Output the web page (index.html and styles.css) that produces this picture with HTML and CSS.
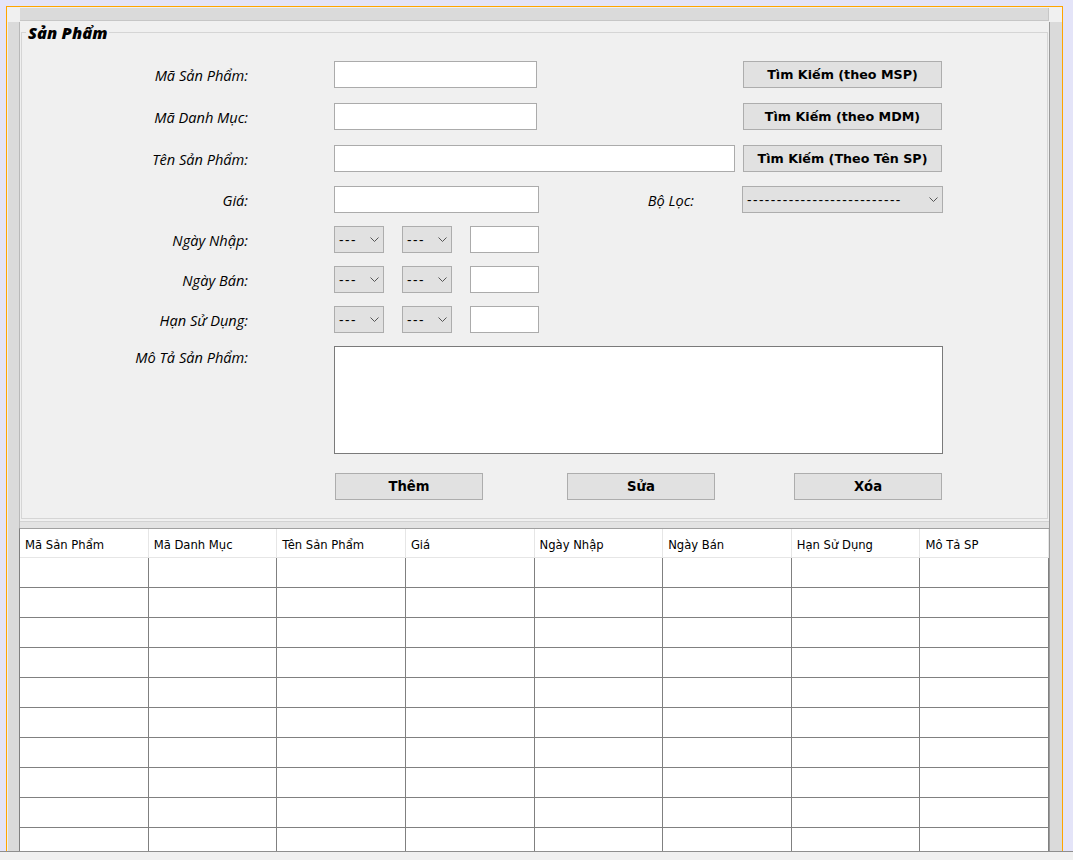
FILE: index.html
```html
<!DOCTYPE html>
<html lang="vi">
<head>
<meta charset="utf-8">
<title>Sản Phẩm</title>
<link rel="stylesheet" href="styles.css">
</head>
<body>
<div class="screen">
  <div class="frame">
    <div class="topbar"></div>
    <div class="side side-left"></div>
    <main class="content">
      <section class="group">
        <h2 class="group-title">Sản Phẩm</h2>
        <div class="form">
          <div class="row">
            <label class="label">Mã Sản Phẩm:</label>
            <input class="field field-code" type="text">
            <button class="btn btn-search gap-after-code">Tìm Kiếm (theo MSP)</button>
          </div>
          <div class="row gap15">
            <label class="label">Mã Danh Mục:</label>
            <input class="field field-code" type="text">
            <button class="btn btn-search gap-after-code">Tìm Kiếm (theo MDM)</button>
          </div>
          <div class="row gap15">
            <label class="label">Tên Sản Phẩm:</label>
            <input class="field field-name" type="text">
            <button class="btn btn-search gap-after-name">Tìm Kiếm (Theo Tên SP)</button>
          </div>
          <div class="row gap14">
            <label class="label">Giá:</label>
            <input class="field field-price" type="text">
            <label class="label-filter">Bộ Lọc:</label>
            <div class="combo combo-filter"><span class="combo-text">--------------------------</span><svg class="chev" viewBox="0 0 9 5" width="9" height="5"><polyline points="0.5,0.5 4.5,4.5 8.5,0.5" fill="none" stroke="#555" stroke-width="1"/></svg></div>
          </div>
          <div class="row gap13">
            <label class="label">Ngày Nhập:</label>
            <div class="combo combo-small"><span class="combo-text">---</span><svg class="chev" viewBox="0 0 9 5" width="9" height="5"><polyline points="0.5,0.5 4.5,4.5 8.5,0.5" fill="none" stroke="#555" stroke-width="1"/></svg></div>
            <div class="combo combo-small combo-next"><span class="combo-text">---</span><svg class="chev" viewBox="0 0 9 5" width="9" height="5"><polyline points="0.5,0.5 4.5,4.5 8.5,0.5" fill="none" stroke="#555" stroke-width="1"/></svg></div>
            <input class="field field-year" type="text">
          </div>
          <div class="row gap13">
            <label class="label">Ngày Bán:</label>
            <div class="combo combo-small"><span class="combo-text">---</span><svg class="chev" viewBox="0 0 9 5" width="9" height="5"><polyline points="0.5,0.5 4.5,4.5 8.5,0.5" fill="none" stroke="#555" stroke-width="1"/></svg></div>
            <div class="combo combo-small combo-next"><span class="combo-text">---</span><svg class="chev" viewBox="0 0 9 5" width="9" height="5"><polyline points="0.5,0.5 4.5,4.5 8.5,0.5" fill="none" stroke="#555" stroke-width="1"/></svg></div>
            <input class="field field-year" type="text">
          </div>
          <div class="row gap13">
            <label class="label">Hạn Sử Dụng:</label>
            <div class="combo combo-small"><span class="combo-text">---</span><svg class="chev" viewBox="0 0 9 5" width="9" height="5"><polyline points="0.5,0.5 4.5,4.5 8.5,0.5" fill="none" stroke="#555" stroke-width="1"/></svg></div>
            <div class="combo combo-small combo-next"><span class="combo-text">---</span><svg class="chev" viewBox="0 0 9 5" width="9" height="5"><polyline points="0.5,0.5 4.5,4.5 8.5,0.5" fill="none" stroke="#555" stroke-width="1"/></svg></div>
            <input class="field field-year" type="text">
          </div>
          <div class="row row-desc gap13">
            <label class="label label-top">Mô Tả Sản Phẩm:</label>
            <textarea class="desc"></textarea>
          </div>
          <div class="actions">
            <button class="btn btn-action">Thêm</button>
            <button class="btn btn-action btn-edit">Sửa</button>
            <button class="btn btn-action btn-delete">Xóa</button>
          </div>
        </div>
      </section>
      <div class="divider"></div>
      <div class="tablepane">
        <table class="grid">
          <thead>
            <tr class="head-row">
              <th>Mã Sản Phẩm</th><th>Mã Danh Mục</th><th>Tên Sản Phẩm</th><th>Giá</th><th>Ngày Nhập</th><th>Ngày Bán</th><th>Hạn Sử Dụng</th><th>Mô Tả SP</th>
            </tr>
          </thead>
          <tbody>
            <tr class="body-row"><td></td><td></td><td></td><td></td><td></td><td></td><td></td><td></td></tr>
            <tr class="body-row"><td></td><td></td><td></td><td></td><td></td><td></td><td></td><td></td></tr>
            <tr class="body-row"><td></td><td></td><td></td><td></td><td></td><td></td><td></td><td></td></tr>
            <tr class="body-row"><td></td><td></td><td></td><td></td><td></td><td></td><td></td><td></td></tr>
            <tr class="body-row"><td></td><td></td><td></td><td></td><td></td><td></td><td></td><td></td></tr>
            <tr class="body-row"><td></td><td></td><td></td><td></td><td></td><td></td><td></td><td></td></tr>
            <tr class="body-row"><td></td><td></td><td></td><td></td><td></td><td></td><td></td><td></td></tr>
            <tr class="body-row"><td></td><td></td><td></td><td></td><td></td><td></td><td></td><td></td></tr>
            <tr class="body-row"><td></td><td></td><td></td><td></td><td></td><td></td><td></td><td></td></tr>
            <tr class="body-row"><td></td><td></td><td></td><td></td><td></td><td></td><td></td><td></td></tr>
            <tr class="body-row"><td></td><td></td><td></td><td></td><td></td><td></td><td></td><td></td></tr>
          </tbody>
        </table>
      </div>
    </main>
    <div class="side side-right"></div>
  </div>
</div>
<div class="statusbar"></div>
</body>
</html>
```

FILE: styles.css
```css
* { box-sizing: border-box; }

html, body {
  margin: 0;
  padding: 0;
  background: #f0f0f0;
  font-family: "DejaVu Sans", sans-serif;
  color: #000;
  overflow: hidden;
}

.screen {
  height: 852px;
  background: #e4e4f8;
  padding: 6px 10px 0 6px;
  border-bottom: 1px solid #8e8e8e;
}

.frame {
  height: 100%;
  border: 1px solid #ffa500;
  border-bottom: none;
  background: #f0f0f0;
  display: grid;
  grid-template-columns: 13px 1029px 13px;
  grid-template-rows: 14px 1fr;
  overflow: hidden;
}

.topbar {
  grid-column: 2;
  grid-row: 1;
  margin-top: 1px;
  background: #dadada;
  border-bottom: 1px solid #c6c6c6;
  border-right: 1px solid #c6c6c6;
}

.side {
  grid-row: 2;
  margin-top: 1px;
  background: #dadada;
}

.side-left {
  grid-column: 1;
  margin-left: 1px;
  border-right: 1px solid #b8b8b8;
}

.side-right {
  grid-column: 3;
  border-left: 1px solid #9a9a9a;
}

.content {
  grid-column: 2;
  grid-row: 2;
  display: flex;
  flex-direction: column;
  min-height: 0;
}

.group {
  position: relative;
  margin: 11px 1px 0;
  height: 487px;
  flex: none;
  border: 1px solid #d5d5d5;
  padding-top: 28px;
}

.group-title {
  position: absolute;
  left: 4px;
  top: -10px;
  margin: 0;
  padding: 0 2px;
  background: #f0f0f0;
  font-family: "Open Sans", sans-serif;
  font-size: 16.5px;
  line-height: 20px;
  font-weight: 800;
  font-style: italic;
}

.form {
  display: flex;
  flex-direction: column;
}

.row {
  display: flex;
  align-items: center;
  height: 27px;
}

.gap15 { margin-top: 15px; }
.gap14 { margin-top: 14px; }
.gap13 { margin-top: 13px; }

.label {
  width: 226px;
  margin-right: 86px;
  text-align: right;
  font-family: "Open Sans", sans-serif;
  font-style: italic;
  font-size: 14.6px;
  line-height: 20px;
}

.label-filter {
  width: 155px;
  margin-right: 48px;
  text-align: right;
  font-family: "Open Sans", sans-serif;
  font-style: italic;
  font-size: 14.6px;
  line-height: 20px;
}

.field {
  height: 27px;
  margin: 0;
  padding: 0 4px;
  background: #fff;
  border: 1px solid #ababab;
  border-radius: 0;
  outline: none;
}

.field-code { width: 203px; }
.field-name { width: 401px; }
.field-price { width: 205px; }
.field-year { width: 69px; margin-left: 18px; }

.btn {
  height: 27px;
  margin: 0;
  padding: 0 0 1px;
  background: #e1e1e1;
  border: 1px solid #adadad;
  border-radius: 0;
  font-family: "DejaVu Sans", sans-serif;
  font-weight: bold;
  font-size: 12.7px;
  color: #000;
}

.btn-search { width: 199px; }
.gap-after-code { margin-left: 206px; }
.gap-after-name { margin-left: 8px; }

.combo {
  height: 27px;
  background: #e1e1e1;
  border: 1px solid #adadad;
  display: flex;
  align-items: center;
  justify-content: space-between;
  padding: 0 4px 0 4px;
}

.combo-small { width: 50px; }
.combo-next { margin-left: 18px; }
.combo-filter { width: 201px; }

.combo-text {
  font-family: "Open Sans", sans-serif;
  font-size: 14px;
  line-height: 20px;
  letter-spacing: 1.45px;
}

.chev { display: block; }

.row-desc {
  height: auto;
  align-items: flex-start;
}

.label-top {
  line-height: 22px;
}

.desc {
  width: 609px;
  height: 108px;
  margin: 0;
  padding: 2px;
  background: #fff;
  border: 1px solid #7a7a7a;
  border-radius: 0;
  resize: none;
  outline: none;
}

.actions {
  display: flex;
  margin-top: 19px;
  margin-left: 313px;
}

.btn-action {
  width: 148px;
  font-size: 13.2px;
}

.btn-edit { margin-left: 84px; }
.btn-delete { margin-left: 79px; }

.divider {
  flex: none;
  margin-top: 2px;
  height: 7px;
  border-top: 1px solid #d2d2d2;
  background: #e3e3e3;
}

.tablepane {
  flex: 1;
  min-height: 0;
  overflow: hidden;
  margin-left: -1px;
  border-left: 1px solid #808080;
  border-top: 1px solid #a0a0a0;
  background: #fff;
}

.grid {
  width: 1029px;
  border-collapse: separate;
  border-spacing: 0;
  table-layout: fixed;
}

.head-row { height: 29px; }

.grid th {
  padding: 3px 0 0 5px;
  border-right: 1px solid #e6e6e6;
  border-bottom: 1px solid #e6e6e6;
  font-family: "DejaVu Sans", sans-serif;
  font-weight: normal;
  font-size: 11.6px;
  text-align: left;
  white-space: nowrap;
  overflow: hidden;
}

.body-row { height: 30px; }

.grid td {
  padding: 0;
  border-right: 1px solid #808080;
  border-bottom: 1px solid #808080;
}

.statusbar {
  height: 8px;
  background: #f0f0f0;
}
```
